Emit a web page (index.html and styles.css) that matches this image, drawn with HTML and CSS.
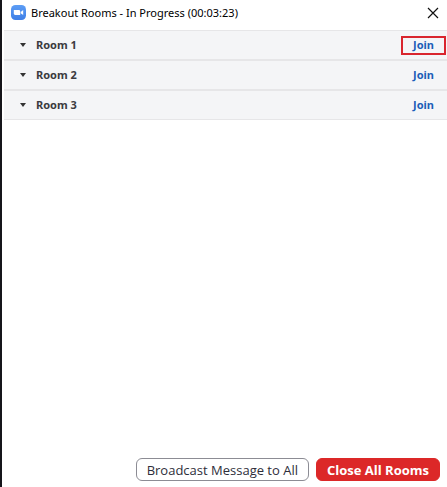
FILE: index.html
```html
<!DOCTYPE html>
<html lang="en">
<head>
  <meta charset="UTF-8" />
  <meta name="viewport" content="width=device-width, initial-scale=1.0"/>
  <title>Breakout Rooms</title>
  <link rel="stylesheet" href="styles.css">
</head>
<body>
  <div class="window">
    <header class="titlebar">
      <svg class="logo" viewBox="0 0 15 15" aria-hidden="true">
        <defs>
          <linearGradient id="blue" x1="0" y1="0" x2="0" y2="1">
            <stop offset="0" stop-color="#5c9df5"/>
            <stop offset="1" stop-color="#3f7fe6"/>
          </linearGradient>
        </defs>
        <rect width="15" height="15" rx="4.500" fill="url(#blue)"/>
        <path d="M2.800 5 H7.800 Q9.200 5 9.200 6.400 V10 H4.200 Q2.800 10 2.800 8.600z" fill="#fff"/>
        <path d="M9.700 6.900 L12.200 5 V10 L9.700 8.200z" fill="#fff"/>
      </svg>
      <h1>Breakout Rooms - In Progress (00:03:23)</h1>
      <button type="button" class="close" aria-label="Close">
        <svg viewBox="0 0 12 12" aria-hidden="true">
          <path d="M1 1 L11 11 M11 1 L1 11" stroke="#111" stroke-width="1.2" fill="none"/>
        </svg>
      </button>
    </header>

    <ul class="rooms">
      <li class="room">
        <button type="button" class="toggle"><span class="arrow"></span>Room 1</button>
        <button type="button" class="join highlighted">Join</button>
      </li>
      <li class="room">
        <button type="button" class="toggle"><span class="arrow"></span>Room 2</button>
        <button type="button" class="join">Join</button>
      </li>
      <li class="room">
        <button type="button" class="toggle"><span class="arrow"></span>Room 3</button>
        <button type="button" class="join">Join</button>
      </li>
    </ul>

    <footer class="actions">
      <button type="button" class="btn">Broadcast Message to All</button>
      <button type="button" class="btn btn-red">Close All Rooms</button>
    </footer>
  </div>
</body>
</html>
```

FILE: styles.css
```css
* {
  box-sizing: border-box;
}
body {
  margin: 0;
  font-family: "Noto Sans", "Open Sans", sans-serif;
  font-size: 11px;
  color: #111;
  background: #fff;
}
button {
  margin: 0;
  padding: 0;
  border: none;
  background: none;
  font: inherit;
  color: inherit;
  cursor: pointer;
}
.window {
  display: flex;
  flex-direction: column;
  min-height: 100vh;
  border-left: 2px solid #15151a;
}
.titlebar {
  display: flex;
  align-items: center;
  height: 30px;
  padding: 0 8px 5px 9px;
}
.logo {
  width: 15px;
  height: 15px;
  margin-right: 5px;
}
h1 {
  flex: 1;
  margin: 0;
  font-size: 11px;
  font-weight: normal;
  line-height: 16px;
  color: #000;
}
.close svg {
  display: block;
  width: 12px;
  height: 12px;
}
.rooms {
  flex: 1;
  margin: 0 0 0 2px;
  padding: 0;
  list-style: none;
}
.room {
  display: flex;
  align-items: center;
  justify-content: space-between;
  height: 30px;
  padding-right: 1px;
  background: #f4f5f7;
  border-top: 1px solid #e6e6e8;
  border-bottom: 1px solid #e6e6e8;
}
.toggle {
  display: flex;
  align-items: center;
  padding-left: 16px;
  font-weight: bold;
  line-height: 16px;
  color: #3b3b40;
}
.arrow {
  margin-right: 10px;
  border: 3px solid transparent;
  border-top: 4px solid #333;
  border-bottom: none;
}
.join {
  width: 45px;
  height: 19px;
  border: 2px solid transparent;
  font-weight: bold;
  line-height: 14px;
  color: #1c5fb8;
}
.join.highlighted {
  border-color: #d9252e;
}
.actions {
  display: flex;
  justify-content: flex-end;
  gap: 7px;
  padding: 0 7px 6px;
}
.btn {
  height: 23px;
  padding: 0 10px;
  border: 1px solid #8c8c94;
  border-radius: 6px;
  font-family: "Open Sans", "Noto Sans", sans-serif;
  font-size: 13px;
  line-height: 20px;
  color: #2e2e3a;
  background: #fff;
}
.btn-red {
  border-color: #dc2828;
  font-weight: bold;
  color: #fff;
  background: #dc2828;
}
```
